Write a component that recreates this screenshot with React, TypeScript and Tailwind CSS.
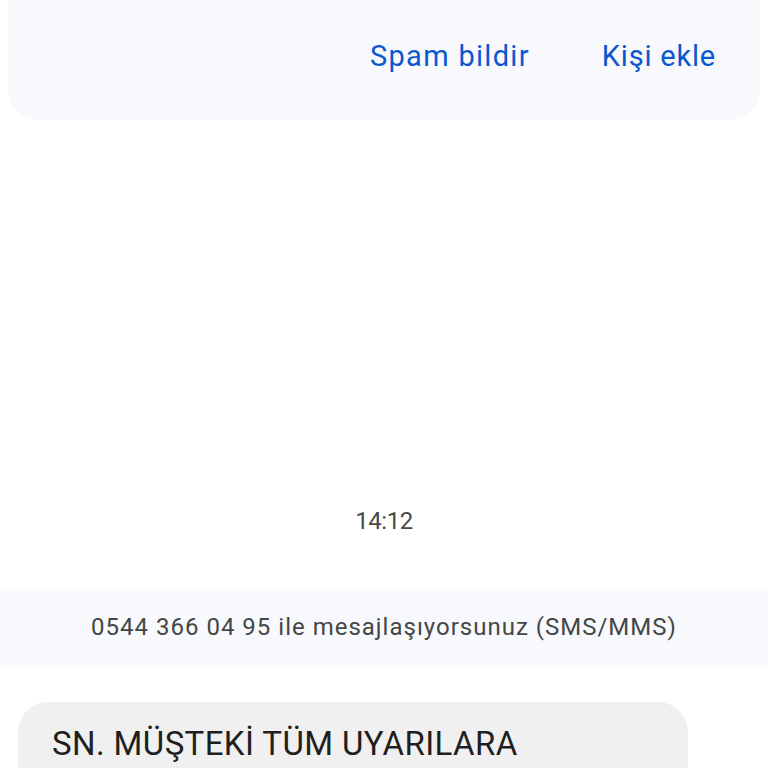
import React from "react";

export default function App() {
  return (
    <div className="w-[768px] h-[768px] overflow-hidden bg-white flex flex-col" style={{ fontFamily: "Roboto, 'Noto Sans', sans-serif" }}>
      <div className="mx-[8px] h-[120px] shrink-0 rounded-b-[30px] bg-[#f7f9fc] flex items-center justify-end pr-[44px] pb-[7px] gap-[72px]">
        <span className="text-[29px] text-[#0b57d0] tracking-[1.3px]">Spam bildir</span>
        <span className="text-[29px] text-[#0b57d0] tracking-[0.8px]">Kişi ekle</span>
      </div>
      <div className="h-[420px] shrink-0 flex items-end justify-center pb-[4px]">
        <span className="text-[24px] leading-[30px] text-[#4a4a4a] tracking-[-0.5px]">14:12</span>
      </div>
      <div className="h-[49px] shrink-0" />
      <div className="h-[76px] shrink-0 bg-[#f7f9fc] flex items-center justify-center">
        <span className="text-[24px] text-[#444746] tracking-[1px]">0544 366 04 95 ile mesajlaşıyorsunuz (SMS/MMS)</span>
      </div>
      <div className="h-[37px] shrink-0" />
      <div className="ml-[18px] w-[670px] h-[120px] shrink-0 rounded-[30px] bg-[#f0f0f0] pl-[34px] pt-[20px]">
        <span className="text-[33px] leading-[44px] text-[#1f1f1f] tracking-[0.4px]">SN. MÜŞTEKİ TÜM UYARILARA</span>
      </div>
    </div>
  );
}
